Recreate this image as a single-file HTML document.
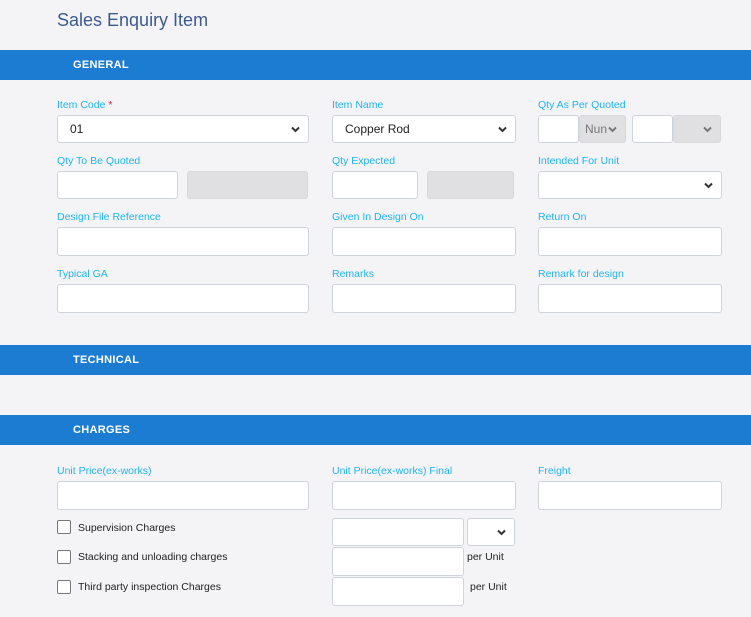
<!DOCTYPE html>
<html><head><style>
body{margin:0;width:751px;height:617px;background:#f4f4f7;font-family:"Liberation Sans",Arial,sans-serif;position:relative;overflow:hidden}
.a{position:absolute}
.t{left:57px;top:10px;font-size:18px;color:#3d5a8c}
.bar{left:0;width:751px;height:30px;background:#1c7cd1;color:#fff;font-weight:bold;font-size:11px;line-height:30px;padding-left:73px;box-sizing:border-box;letter-spacing:.3px}
.l{font-size:10.5px;color:#1eb4f2;margin-top:1px}
.i{background:#fff;border:1px solid #cfd3da;border-radius:3px;box-sizing:border-box}
.g{background:#e0e0e2;border:1px solid #d8d8db;border-radius:3px;box-sizing:border-box}
.v{font-size:12px;color:#222;line-height:26px;padding-left:12px}
.c{position:absolute;right:7px;top:50%;margin-top:-3px}
.cb{width:14px;height:14px;border:1px solid #777;border-radius:2px;background:#fff;box-sizing:border-box}
.k{font-size:10.5px;color:#222;margin-top:1px}
</style></head><body>
<div class="a t">Sales Enquiry Item</div>
<div class="a bar" style="top:50px">GENERAL</div>
<svg width="0" height="0" style="position:absolute"><defs><path id="ch" d="M1 1.5 L4.5 5 L8 1.5" fill="none" stroke-width="2"/></defs></svg>

<div class="a l" style="left:57px;top:98px">Item Code <span style="color:#e0203a">*</span></div>
<div class="a l" style="left:332px;top:98px">Item Name</div>
<div class="a l" style="left:538px;top:98px">Qty As Per Quoted</div>
<div class="a i v" style="left:57px;top:115px;width:252px;height:28px">01<svg class="c" width="10" height="7"><use href="#ch" stroke="#333"/></svg></div>
<div class="a i v" style="left:332px;top:115px;width:184px;height:28px">Copper Rod<svg class="c" width="10" height="7"><use href="#ch" stroke="#333"/></svg></div>
<div class="a i" style="left:538px;top:115px;width:41px;height:28px"></div>
<div class="a g" style="left:579px;top:115px;width:47px;height:28px;font-size:12px;color:#777;line-height:26px;padding-left:5px">Nun<svg class="c" width="10" height="7"><use href="#ch" stroke="#777"/></svg></div>
<div class="a i" style="left:632px;top:115px;width:41px;height:28px"></div>
<div class="a g" style="left:673px;top:115px;width:48px;height:28px"><svg class="c" width="10" height="7"><use href="#ch" stroke="#777"/></svg></div>

<div class="a l" style="left:57px;top:154px">Qty To Be Quoted</div>
<div class="a l" style="left:332px;top:154px">Qty Expected</div>
<div class="a l" style="left:538px;top:154px">Intended For Unit</div>
<div class="a i" style="left:57px;top:171px;width:121px;height:28px"></div>
<div class="a g" style="left:187px;top:171px;width:121px;height:28px"></div>
<div class="a i" style="left:332px;top:171px;width:86px;height:28px"></div>
<div class="a g" style="left:427px;top:171px;width:87px;height:28px"></div>
<div class="a i" style="left:538px;top:171px;width:184px;height:28px"><svg class="c" width="10" height="7"><use href="#ch" stroke="#333"/></svg></div>

<div class="a l" style="left:57px;top:210px">Design File Reference</div>
<div class="a l" style="left:332px;top:210px">Given In Design On</div>
<div class="a l" style="left:538px;top:210px">Return On</div>
<div class="a i" style="left:57px;top:227px;width:252px;height:29px"></div>
<div class="a i" style="left:332px;top:227px;width:184px;height:29px"></div>
<div class="a i" style="left:538px;top:227px;width:184px;height:29px"></div>

<div class="a l" style="left:57px;top:267px">Typical GA</div>
<div class="a l" style="left:332px;top:267px">Remarks</div>
<div class="a l" style="left:538px;top:267px">Remark for design</div>
<div class="a i" style="left:57px;top:284px;width:252px;height:29px"></div>
<div class="a i" style="left:332px;top:284px;width:184px;height:29px"></div>
<div class="a i" style="left:538px;top:284px;width:184px;height:29px"></div>

<div class="a bar" style="top:345px">TECHNICAL</div>
<div class="a bar" style="top:415px">CHARGES</div>

<div class="a l" style="left:57px;top:464px">Unit Price(ex-works)</div>
<div class="a l" style="left:332px;top:464px">Unit Price(ex-works) Final</div>
<div class="a l" style="left:538px;top:464px">Freight</div>
<div class="a i" style="left:57px;top:481px;width:252px;height:29px"></div>
<div class="a i" style="left:332px;top:481px;width:184px;height:29px"></div>
<div class="a i" style="left:538px;top:481px;width:184px;height:29px"></div>

<div class="a cb" style="left:57px;top:520px"></div>
<div class="a k" style="left:78px;top:521px">Supervision Charges</div>
<div class="a cb" style="left:57px;top:550px"></div>
<div class="a k" style="left:78px;top:550px">Stacking and unloading charges</div>
<div class="a cb" style="left:57px;top:580px"></div>
<div class="a k" style="left:78px;top:580px">Third party inspection Charges</div>
<div class="a i" style="left:332px;top:518px;width:132px;height:28px"></div>
<div class="a i" style="left:467px;top:518px;width:48px;height:28px"><svg class="c" width="10" height="7"><use href="#ch" stroke="#333"/></svg></div>
<div class="a i" style="left:332px;top:547px;width:132px;height:29px"></div>
<div class="a k" style="left:467px;top:550px">per Unit</div>
<div class="a i" style="left:332px;top:577px;width:132px;height:29px"></div>
<div class="a k" style="left:470px;top:580px">per Unit</div>
</body></html>
